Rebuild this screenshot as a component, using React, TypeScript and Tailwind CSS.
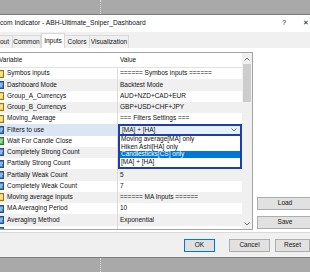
import React from "react";

type Kind = "y" | "b" | "g";
type Row = { name: string; value: string; icon: Kind };

const rows: Row[] = [
  { name: "Symbos inputs", value: "====== Symbos inputs ======", icon: "y" },
  { name: "Dashboard Mode", value: "Backtest Mode", icon: "b" },
  { name: "Group_A_Currencys", value: "AUD+NZD+CAD+EUR", icon: "y" },
  { name: "Group_B_Currencys", value: "GBP+USD+CHF+JPY", icon: "y" },
  { name: "Moving_Average", value: "=== Filters Settings ===", icon: "y" },
  { name: "Filters to use", value: "[MA] + [HA]", icon: "b" },
  { name: "Wait For Candle Close", value: "", icon: "g" },
  { name: "Completely Strong Count", value: "", icon: "b" },
  { name: "Partially Strong Count", value: "", icon: "b" },
  { name: "Partially Weak Count", value: "5", icon: "b" },
  { name: "Completely Weak Count", value: "7", icon: "b" },
  { name: "Moving average Inputs", value: "====== MA Inputs ======", icon: "y" },
  { name: "MA Averaging Period", value: "10", icon: "b" },
  { name: "Averaging Method", value: "Exponential", icon: "b" },
  { name: "", value: "", icon: "b" },
];

const options = ["Moving average[MA] only", "Hiken Ashi[HA] only", "Candlesticks[CS] only", "[MA] + [HA]"];

function TypeIcon({ kind }: { kind: Kind }) {
  const fill = kind === "y" ? "#f3cf4c" : kind === "g" ? "#5db65d" : "#4a84cc";
  const stroke = kind === "y" ? "#9a7614" : kind === "g" ? "#2f7a2f" : "#22508f";
  return (
    <svg width="9" height="8" viewBox="0 0 9 8" className="-ml-[5px] shrink-0">
      <rect x="0.5" y="0.5" width="8" height="7" fill={fill} stroke={stroke} />
      <path d="M5 3h3M5 5h2" stroke="#fff" strokeWidth="0.8" />
    </svg>
  );
}

function Chevron({ up }: { up?: boolean }) {
  return (
    <svg width="6" height="4" viewBox="0 0 6 4">
      <path d={up ? "M0.5 3.5L3 1l2.5 2.5" : "M0.5 0.5L3 3l2.5-2.5"} fill="none" stroke="#606060" strokeWidth="0.9" />
    </svg>
  );
}

function Btn({ label, w, primary }: { label: string; w: string; primary?: boolean }) {
  return (
    <div
      className={`${w} h-[13px] shrink-0 flex items-center justify-center bg-[#e1e1e1] border ${
        primary ? "border-[#0078d7]" : "border-[#adadad]"
      }`}
    >
      {label}
    </div>
  );
}

function GridRow({ row, i }: { row: Row; i: number }) {
  const selected = i === 5;
  const bg = selected ? "bg-[#dae6f4]" : i % 2 === 1 ? "bg-[#f0f0f0]" : "bg-white";
  return (
    <div className={`flex h-[11.25px] shrink-0 ${bg}`}>
      <div className="w-[118px] shrink-0 flex items-center gap-[3px] border-r border-[#dcdcdc] overflow-hidden whitespace-nowrap">
        <TypeIcon kind={row.icon} />
        <span>{row.name}</span>
      </div>
      {selected ? (
        <div className="flex-1 relative">
          <div className="h-full flex items-center justify-between pl-[2px] pr-[3px] border-2 border-[#1f3ea6] bg-[#e6f0fb]">
            <span>{row.value}</span>
            <Chevron />
          </div>
          <div className="absolute left-0 right-0 top-full z-10 bg-white border-2 border-t-0 border-[#1f3ea6] pb-[1px]">
            {options.map((o, k) => (
              <div
                key={o}
                className={`h-[7.5px] flex items-center pl-[1px] whitespace-nowrap ${
                  k === 2 ? "bg-[#0078d7] text-white" : ""
                }`}
              >
                {o}
              </div>
            ))}
          </div>
        </div>
      ) : (
        <div className="flex-1 flex items-center pl-[2px] whitespace-nowrap overflow-hidden">{row.value}</div>
      )}
    </div>
  );
}

export default function App() {
  return (
    <div className="w-[310px] h-[272px] overflow-hidden flex flex-col bg-[#f0f0f0] text-[#111] text-[6.5px] leading-none font-['Liberation_Sans',Arial,sans-serif]">
      <div className="h-[15px] shrink-0 bg-[#a9a9a9] border-b border-[#7c7c7c] pl-[100px]">
        <div className="h-full border-l border-dotted border-[#d8d8d8]" />
      </div>

      <div className="h-[17px] shrink-0 bg-white flex items-center text-[6.7px]">
        <span className="whitespace-nowrap">com Indicator - ABH-Ultimate_Sniper_Dashboard</span>
        <span className="ml-auto mr-[17px]">?</span>
        <span className="mr-[1px]">✕</span>
      </div>

      <div className="h-[16px] shrink-0 flex items-end">
        <div className="w-[13px] h-[13px] flex items-center border-t border-r border-[#d9d9d9] bg-[#f0f0f0]">out</div>
        <div className="w-[28px] h-[13px] flex items-center justify-center border-t border-r border-[#d9d9d9]">Common</div>
        <div className="w-[24px] h-[15px] flex items-center justify-center border-t border-x border-[#d9d9d9] bg-white">Inputs</div>
        <div className="w-[25px] h-[13px] flex items-center justify-center border-t border-r border-[#d9d9d9]">Colors</div>
        <div className="w-[39px] h-[13px] flex items-center justify-center border-t border-r border-[#d9d9d9]">Visualization</div>
      </div>

      <div className="h-[185px] shrink-0 flex bg-white border-b border-[#d9d9d9]">
        <div className="w-[253px] h-[178px] mt-[4px] shrink-0 flex overflow-hidden border-y border-r border-[#a3a3a3]">
          <div className="w-[242px] flex flex-col">
            <div className="h-[15px] shrink-0 flex border-b border-[#e3e3e3]">
              <div className="w-[118px] shrink-0 flex items-center -ml-[1px]">Variable</div>
              <div className="flex items-center pl-[3px]">Value</div>
            </div>
            {rows.map((r, i) => (
              <GridRow key={i} row={r} i={i} />
            ))}
          </div>
          <div className="w-[10px] flex flex-col bg-[#f0f0f0]">
            <div className="h-[11px] shrink-0 flex items-center justify-center">
              <Chevron up />
            </div>
            <div className="h-[38px] mx-[1px] shrink-0 bg-[#cdcdcd]" />
            <div className="flex-1" />
            <div className="h-[11px] shrink-0 flex items-center justify-center">
              <Chevron />
            </div>
          </div>
        </div>
        <div className="flex-1 flex flex-col justify-end gap-[6px] pl-[4px] pb-[3px]">
          <Btn label="Load" w="w-[56px]" />
          <Btn label="Save" w="w-[56px]" />
        </div>
      </div>

      <div className="h-[24px] shrink-0 flex items-center justify-end">
        <Btn label="OK" w="w-[31px]" primary />
        <div className="w-[14px] shrink-0" />
        <Btn label="Cancel" w="w-[41px]" />
        <div className="w-[5px] shrink-0" />
        <Btn label="Reset" w="w-[35px]" />
      </div>

      <div className="flex-1 bg-[#a9a9a9] border-t border-[#7c7c7c] pl-[100px]">
        <div className="h-full border-l border-dotted border-[#d8d8d8]" />
      </div>
    </div>
  );
}
